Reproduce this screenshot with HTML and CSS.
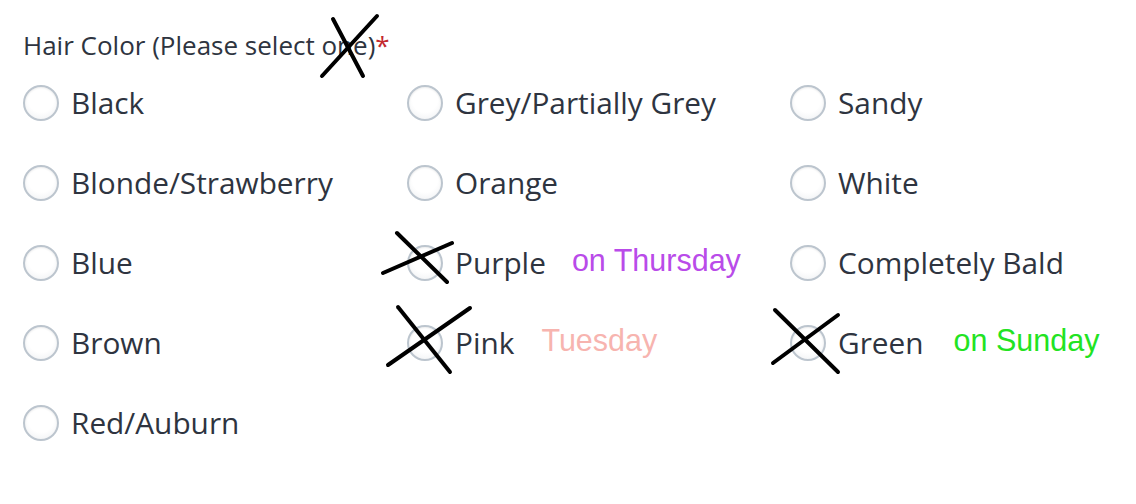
FILE: index.html
```html
<!DOCTYPE html>
<html>
<head>
<meta charset="utf-8">
<link rel="stylesheet" href="styles.css">
</head>
<body>
<div class="field">
  <div class="legend">Hair Color (Please select one)<span class="req">*</span></div>
  <div class="grid">
    <label class="opt"><span class="radio"></span><span class="txt">Black</span></label>
    <label class="opt"><span class="radio"></span><span class="txt">Grey/Partially Grey</span></label>
    <label class="opt"><span class="radio"></span><span class="txt">Sandy</span></label>

    <label class="opt"><span class="radio"></span><span class="txt">Blonde/Strawberry</span></label>
    <label class="opt"><span class="radio"></span><span class="txt">Orange</span></label>
    <label class="opt"><span class="radio"></span><span class="txt">White</span></label>

    <label class="opt"><span class="radio"></span><span class="txt">Blue</span></label>
    <label class="opt"><span class="radio"></span><span class="txt">Purple</span><span class="note purple">on Thursday</span></label>
    <label class="opt"><span class="radio"></span><span class="txt">Completely Bald</span></label>

    <label class="opt"><span class="radio"></span><span class="txt">Brown</span></label>
    <label class="opt"><span class="radio"></span><span class="txt">Pink</span><span class="note pink">Tuesday</span></label>
    <label class="opt"><span class="radio"></span><span class="txt">Green</span><span class="note green">on Sunday</span></label>

    <label class="opt"><span class="radio"></span><span class="txt">Red/Auburn</span></label>
  </div>
</div>
<svg class="marks" width="1136" height="504" viewBox="0 0 1136 504">
  <g stroke="#000" stroke-width="4" stroke-linecap="round" fill="none">
    <line x1="322" y1="76" x2="377" y2="16"/>
    <line x1="333" y1="19" x2="363" y2="76"/>
    <line x1="383" y1="273" x2="452" y2="243"/>
    <line x1="397" y1="233" x2="447" y2="282"/>
    <line x1="388" y1="365" x2="470" y2="308"/>
    <line x1="398" y1="307" x2="450" y2="372"/>
    <line x1="773" y1="363" x2="838" y2="315"/>
    <line x1="775" y1="310" x2="838" y2="372"/>
  </g>
</svg>
</body>
</html>
```
FILE: styles.css
```css
html, body {
  margin: 0;
  padding: 0;
  background: #ffffff;
}
body {
  width: 1136px;
  height: 504px;
  position: relative;
  overflow: hidden;
  font-family: "Open Sans", "Noto Sans", sans-serif;
  color: #2e3440;
}
.field {
  padding: 28px 0 0 23px;
}
.legend {
  font-size: 26px;
  line-height: 34px;
  height: 34px;
  color: #2e3440;
}
.req {
  color: #c3282e;
}
.grid {
  display: grid;
  grid-template-columns: 384px 383px 360px;
  grid-auto-rows: 80px;
  margin-top: 22px;
}
.opt {
  display: flex;
  align-items: center;
  height: 38px;
}
.radio {
  width: 32px;
  height: 32px;
  border-radius: 50%;
  border: 2px solid #bcc5ce;
  background: radial-gradient(circle at 50% 40%, #ffffff 50%, #eceef1 100%);
  box-shadow: inset 0 1px 2px rgba(0,0,0,0.08);
  flex: none;
}
.txt {
  font-size: 29.8px;
  margin-left: 12px;
  line-height: 38px;
}
.note {
  font-family: "Liberation Sans", Arial, sans-serif;
  font-size: 30.5px;
  line-height: 38px;
  margin-top: -6px;
}
.purple { color: #b94be9; margin-left: 26px; }
.pink { color: #f7b4af; margin-left: 27px; }
.green { color: #22e322; margin-left: 30px; }
.marks {
  position: absolute;
  left: 0;
  top: 0;
  pointer-events: none;
}
```
